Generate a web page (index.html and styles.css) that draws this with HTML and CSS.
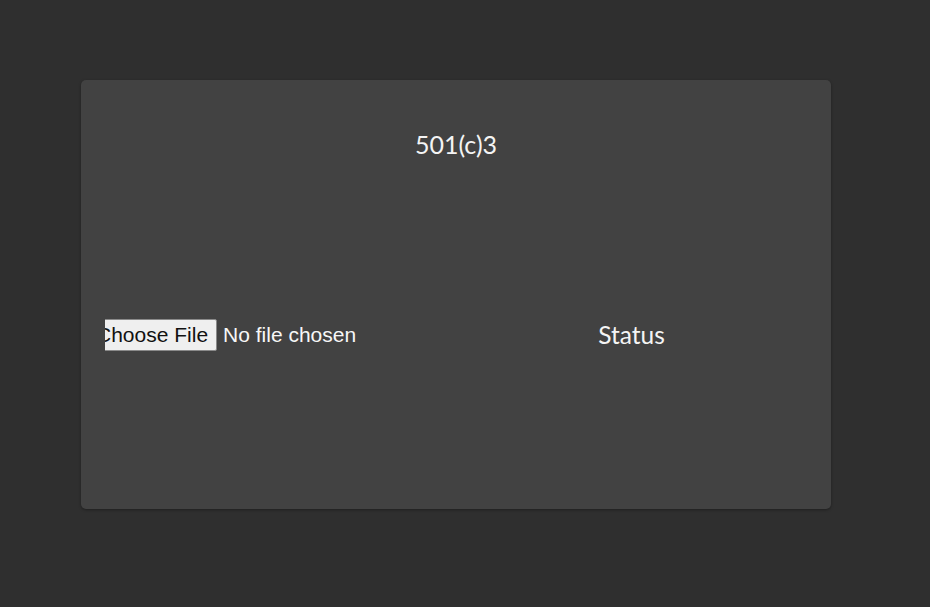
FILE: index.html
```html
<!DOCTYPE html>
<html>
<head>
<meta charset="utf-8">
<link rel="stylesheet" href="styles.css">
</head>
<body>
<div class="card">
  <h1 class="title">501(c)3</h1>
  <div class="row">
    <div class="col col-left">
      <div class="file-wrap"><input type="file" class="file"></div>
    </div>
    <div class="col col-right">
      <span class="status">Status</span>
    </div>
  </div>
</div>
</body>
</html>
```
FILE: styles.css
```css
html, body { margin: 0; padding: 0; }
body {
  background: #2f2f2f;
  width: 930px;
  height: 607px;
  padding: 80px 0 0 81px;
  box-sizing: border-box;
  font-family: Lato, "Noto Sans", sans-serif;
  color: #f4f4f4;
}
.card {
  width: 750px;
  height: 429px;
  background: #424242;
  border-radius: 5px;
  box-shadow: 0 1px 3px rgba(0,0,0,0.35);
  padding: 49px 24px 0 24px;
  box-sizing: border-box;
  display: flex;
  flex-direction: column;
}
.title {
  margin: 0;
  text-align: center;
  font-weight: 400;
  font-size: 25px;
  line-height: 30px;
}
.row {
  display: grid;
  grid-template-columns: minmax(0, 1fr) minmax(0, 1fr);
  margin-top: 160px;
  height: 32px;
  align-items: center;
}
.file-wrap {
  overflow: hidden;
  height: 32px;
  display: flex;
  align-items: center;
}
.file {
  font-family: "Liberation Sans", Arial, sans-serif;
  font-size: 21px;
  color: #f7f7f7;
  margin-left: -18px;
  height: 32px;
  flex: none;
}
.file::file-selector-button {
  font: inherit;
  height: 32px;
  padding: 0 8px;
  margin-right: 6px;
  background: #efefef;
  color: #111;
  border: 1px solid #8a8a8a;
  border-radius: 2px;
}
.col-right { text-align: center; }
.status { font-size: 24.5px; line-height: 32px; }
```
